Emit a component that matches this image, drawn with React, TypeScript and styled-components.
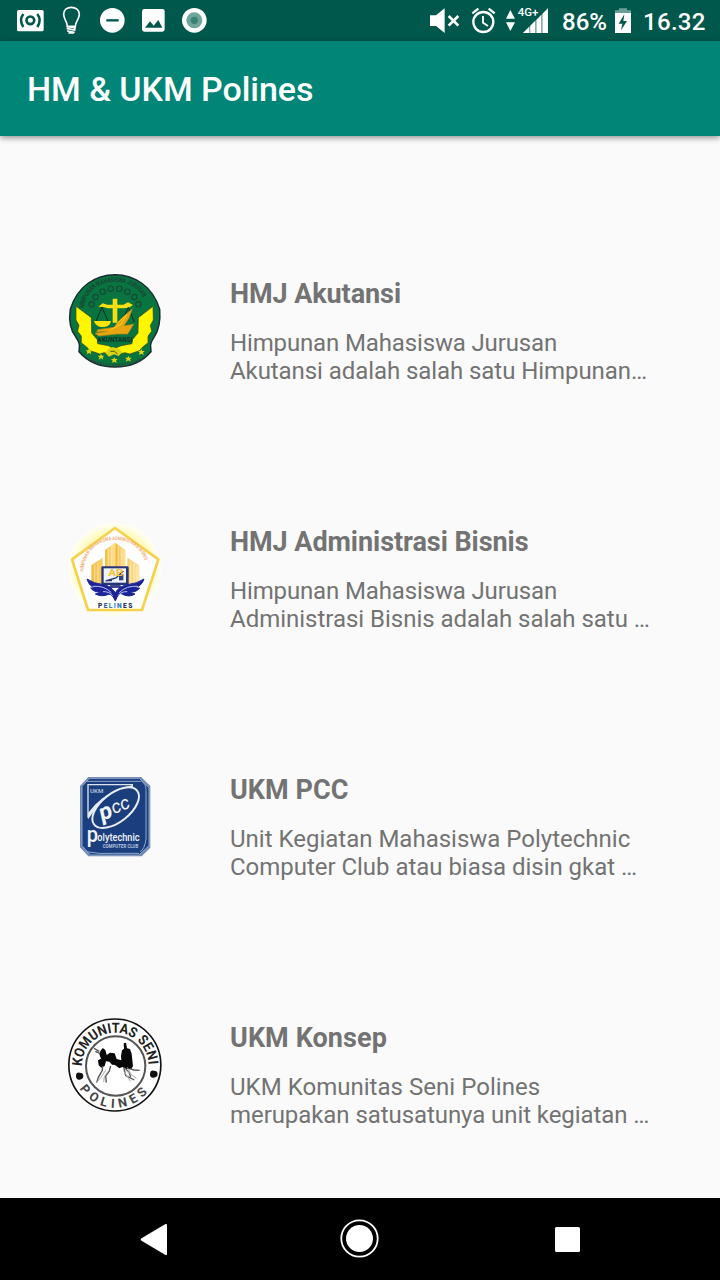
import React from "react";
import styled, { createGlobalStyle } from "styled-components";

const GlobalStyle = createGlobalStyle`
  * { box-sizing: border-box; }
  body { margin: 0; background: #fafafa; font-family: Roboto, "Liberation Sans", sans-serif; }
`;

const Screen = styled.div`
  display: flex;
  flex-direction: column;
  width: 720px;
  height: 1280px;
  overflow: hidden;
  background: #fafafa;
`;

const StatusBar = styled.header`
  display: flex;
  flex: none;
  justify-content: space-between;
  height: 41px;
  padding: 0 14px 0 10px;
  background: #00574b;
  color: #fff;
`;

const StatusGroup = styled.div`
  display: flex;
  align-items: center;
`;

const StatusIcon = styled.svg<{ $w: number; $gap?: number }>`
  flex: none;
  display: block;
  width: ${(p) => p.$w}px;
  height: 41px;
  margin-right: ${(p) => p.$gap ?? 0}px;
`;

const StatusText = styled.span<{ $w: number; $tracking?: number }>`
  width: ${(p) => p.$w}px;
  font-size: 24px;
  line-height: 41px;
  font-weight: 500;
  letter-spacing: ${(p) => p.$tracking ?? 0}px;
  white-space: nowrap;
  padding-top: 3px;
`;

const AppBar = styled.div`
  position: relative;
  flex: none;
  display: flex;
  align-items: center;
  height: 95px;
  padding: 0 27px;
  background: #008577;
  box-shadow: 0 2px 6px rgba(0, 0, 0, 0.42);
`;

const AppTitle = styled.h1`
  margin: 0;
  color: #fff;
  font-size: 34px;
  line-height: 40px;
  font-weight: 500;
  letter-spacing: -0.05px;
`;

const List = styled.ul`
  flex: 1;
  min-height: 0;
  margin: 0;
  padding: 61px 0 0;
  list-style: none;
`;

const Row = styled.li`
  display: grid;
  grid-template-columns: 170px 1fr;
  align-items: center;
  height: 248px;
  padding-left: 60px;
`;

const Logo = styled.svg`
  display: block;
  width: 110px;
  height: 110px;
`;

const RowText = styled.div`
  color: #737373;
  padding-top: 20px;
`;

const RowTitle = styled.h2<{ $tracking: number }>`
  margin: 0 0 19px;
  font-size: 27px;
  line-height: 32px;
  font-weight: 700;
  letter-spacing: ${(p) => p.$tracking}px;
`;

const RowDescription = styled.p`
  margin: 0;
  font-size: 24px;
  line-height: 28px;
`;

const DescriptionLine = styled.span<{ $tracking: number }>`
  display: block;
  white-space: nowrap;
  letter-spacing: ${(p) => p.$tracking}px;
`;

const NavBar = styled.nav`
  flex: none;
  display: grid;
  grid-template-columns: repeat(3, 206px);
  justify-content: center;
  height: 82px;
  background: #000;
`;

const NavButton = styled.button`
  display: flex;
  align-items: center;
  justify-content: center;
  padding: 0;
  border: 0;
  background: none;
`;

function AkuntansiLogo() {
  return (
    <Logo viewBox="0 3 330 330">
      <circle cx="165" cy="170" r="138" fill="#fff" />
      <path
        d="M31 133C51 65 106 29 165 29s114 36 134 104c3 36-2 62-17 84-8 12-12 20-10 29l1 14C247 290 211 306 165 306S83 290 57 260l1-14c2-9-2-17-10-29C31 195 26 165 31 133Z"
        fill="#08743f"
        stroke="#1d2c35"
        strokeWidth="4.500"
      />
      <path id="akArc" d="M71 130C79 78 116 51 165 51s86 27 94 79" fill="none" />
      <text fontFamily="Roboto, sans-serif" fontSize="20" fontWeight="700" fill="#1b4237">
        <textPath href="#akArc" textLength="236" lengthAdjust="spacingAndGlyphs">HIMPUNAN MAHASISWA JURUSAN</textPath>
      </text>
      <g fill="none" stroke="#1a4638" strokeWidth="3.500">
        <circle cx="95" cy="118" r="8" />
        <circle cx="107" cy="96" r="8" />
        <circle cx="128" cy="80" r="8" />
        <circle cx="152" cy="71" r="8" />
        <circle cx="178" cy="71" r="8" />
        <circle cx="202" cy="80" r="8" />
        <circle cx="223" cy="96" r="8" />
        <circle cx="235" cy="118" r="8" />
      </g>
      <g fill="#fff500" stroke="#39451b" strokeWidth="2">
        <path d="M48 124 94 158 95 204 112 224 113 236 145 242 160 250 151 268 132 263 119 267 105 262 90 257 80 246 64 233 64 213 53 199 57 181 48 165Z" />
        <path d="M279 124 235 158 234 204 217 224 216 236 184 242 165 250 175 268 195 263 209 267 224 262 238 257 248 246 264 233 264 213 275 199 271 181 280 165Z" />
      </g>
      <path d="M158 101h14v72h-14zM115 125l13-10 14 4h48l14-7 15 8-13 8-15 2h-48l-13-4Z" fill="#f6df10" />
      <path d="m126 127-19 44m19-44 19 44m60-44-20 44m20-44 18 44" stroke="#112b27" strokeWidth="3" />
      <path d="M102 168h51c-3 14-12 18-25 18s-22-5-26-18Z" fill="#ffe400" />
      <path d="m113 194 49-7 17-22 38-34-10 28-15 23 29-4-18 29h-32l-54 6-12-8 37-6-32 2Z" fill="#e7a510" stroke="#b98911" strokeWidth="2" />
      <path d="m151 194 32-16 17-29-31 29" fill="none" stroke="#ffd01b" strokeWidth="3" />
      <text x="112" y="230" textLength="106" lengthAdjust="spacingAndGlyphs" fontFamily="Roboto, sans-serif" fontSize="22" fontWeight="700" fill="#132e2b">AKUNTANSI</text>
      <path d="m144 252 14-6 19 6 10 9-11 12-14-5-15 7-10-10Z" fill="#ddd314" />
      <path d="M151 259h12l10 8" fill="none" stroke="#44601d" strokeWidth="3" />
      <g fill="#dfd412">
        {[[87, 259], [123, 275], [163, 285], [205, 281], [244, 261]].map(([x, y]) => (
          <path key={x} transform={`translate(${x} ${y})`} d="m0-9 3 6h7l-5 5 2 7-7-4-7 4 2-7-5-5h7Z" />
        ))}
      </g>
      <path d="M86 282q79 34 158 0" fill="none" stroke="#2a493a" strokeWidth="5" strokeDasharray="5 4" />
    </Logo>
  );
}

function BisnisLogo() {
  return (
    <Logo viewBox="0 -3 330 330">
      <defs>
        <radialGradient id="halo">
          <stop offset="78%" stopColor="#fff9b8" />
          <stop offset="92%" stopColor="#fffde2" />
          <stop offset="100%" stopColor="#fffef5" />
        </radialGradient>
        <linearGradient id="tower">
          <stop stopColor="#f4bd43" />
          <stop offset=".45" stopColor="#ffe194" />
          <stop offset=".55" stopColor="#f4bb3d" />
          <stop offset="1" stopColor="#ffe5a8" />
        </linearGradient>
      </defs>
      <circle cx="164" cy="163" r="139" fill="url(#halo)" />
      <path d="M165 39 295 133 246 285H84L36 133Z" fill="#fff" stroke="#f6d24c" strokeWidth="8" strokeLinejoin="round" />
      <path id="abArc" d="M70 170C77 104 116 75 165 75s90 29 98 95" fill="none" />
      <text fontFamily="Roboto, sans-serif" fontSize="15" fontWeight="700" fill="#edb077">
        <textPath href="#abArc" textLength="266" lengthAdjust="spacingAndGlyphs">HIMPUNAN MAHASISWA ADMINISTRASI BISNIS</textPath>
      </text>
      <g fill="url(#tower)">
        <path d="m165 83 32 22v105h-62V105Z" />
        <path d="m128 128-34 23v50l35 16ZM202 128l36 23v50l-37 16Z" />
      </g>
      <g stroke="#fff0be" strokeWidth="2">
        <path d="M145 101v54m10-64v65m20-65v65m10-57v57M104 148v52m10-58v64M212 140v71m10-64v60m9-53v45" />
      </g>
      <path d="M128 154h74q4 0 4 4v48q0 4-4 4h-74q-4 0-4-4v-48q0-4 4-4Z" fill="#273579" />
      <path d="M131 160h67v43h-67z" fill="#eef3fb" />
      <path d="m137 198 31-9 22-21m-48 29h14" stroke="#26356f" strokeWidth="4" fill="none" />
      <path d="M177 177h13v19h-13z" fill="#33437c" />
      <text x="145" y="184" fontFamily="Roboto, sans-serif" fontSize="26" fontWeight="700" fill="#f7c02c" textLength="45" lengthAdjust="spacingAndGlyphs">AB</text>
      <path d="M151 210h30l4 9h-40Z" fill="#3a468e" />
      <path d="M81 192q20 14 50 17 21 3 35 24 13-21 36-24 29-3 50-17-6 21-29 27l16 0q-9 13-31 13l17 5q-18 12-41-1-8-3-18 22-10-23-20-20-22 9-40-1l17-5q-21 0-31-13h16Q88 216 81 192Z" fill="#1a2397" stroke="#1a2397" strokeWidth="3" />
      <path d="M98 214q35-3 56 19m80-19q-35-3-56 19m-49-3q18-1 29 12m44-12q-18-1-28 12" fill="none" stroke="#dfe3ff" strokeWidth="2.500" />
      <text x="114" y="278" textLength="103" fontFamily="Roboto, sans-serif" fontSize="20" fontWeight="900" fill="#26334f">
        P<tspan fill="#375e86">E</tspan><tspan fill="#3b82a8">L</tspan><tspan fill="#2994ce">I</tspan><tspan fill="#3577b6">N</tspan>ES
      </text>
    </Logo>
  );
}

function PccLogo() {
  return (
    <Logo viewBox="0 -9 330 330">
      <path d="M85 36h158l28 27v185l-26 26H85l-25-27V63Z" fill="#7089b4" />
      <path d="M88 40h150l29 28v174l-30 28H91l-25-28V64Z" fill="#1b3f7e" stroke="#8fa5c8" strokeWidth="3" />
      <path d="M77 49h167m1 0q13 8 13 25v148q-4 31-18 38" fill="none" stroke="#8fa6ca" strokeWidth="3" />
      <path d="M84 158V59h133v12" fill="none" stroke="#dbe4ef" strokeWidth="4" />
      <path d="M84 163V144L105 119 128 99 155 84 184 68 217 61 213 72 177 82 143 98 116 119Z" fill="#e4ebf2" />
      <ellipse cx="167" cy="128" rx="82" ry="43" transform="rotate(-38 167 128)" fill="#1b3f7d" stroke="#e7edf2" strokeWidth="6" />
      <g transform="rotate(-23 167 137)" fill="#f0f3f7" fontFamily="Roboto, sans-serif" fontStyle="italic">
        <text x="118" y="150" fontSize="68" fontWeight="700" textLength="39" lengthAdjust="spacingAndGlyphs">p</text>
        <text x="158" y="145" fontSize="56" fontWeight="400" textLength="56" lengthAdjust="spacingAndGlyphs">cc</text>
      </g>
      <text x="90" y="85" fontFamily="Roboto, sans-serif" fontSize="14" fontWeight="700" fill="#a9bbd5" textLength="40" lengthAdjust="spacingAndGlyphs">UKM</text>
      <text x="80" y="232" fontFamily="Roboto, sans-serif" fontSize="64" fill="#f1f4f8" fontWeight="500" textLength="34" lengthAdjust="spacingAndGlyphs">p</text>
      <text x="112" y="228" fontFamily="Roboto, sans-serif" fontSize="32" fill="#f0f3f8" fontWeight="500" textLength="127" lengthAdjust="spacingAndGlyphs">olytechnic</text>
      <text x="128" y="248" fontFamily="Roboto, sans-serif" fontSize="17" fill="#b6c5dc" fontWeight="700" textLength="107" lengthAdjust="spacingAndGlyphs">COMPUTER CLUB</text>
      <path d="M79 260q38 8 78 5h80" stroke="#8ea8cd" strokeWidth="3" fill="none" />
    </Logo>
  );
}

function KonsepLogo() {
  return (
    <Logo viewBox="0 0 330 330">
      <circle cx="164.500" cy="165" r="138" fill="#fff" stroke="#111" strokeWidth="5" />
      <circle cx="167" cy="168" r="89" fill="#fff" stroke="#555" strokeWidth="6" />
      <path id="konsepTop" d="M66 169A100 100 0 0 1 266 167" fill="none" />
      <path id="konsepBottom" d="M54 228A126 126 0 0 0 274 230" fill="none" />
      <g fontFamily="Roboto, sans-serif" fontWeight="700">
        <text fill="#222" fontSize="42"><textPath href="#konsepTop" textLength="311" lengthAdjust="spacingAndGlyphs">KOMUNITAS SENI</textPath></text>
        <text fill="#444" fontSize="38"><textPath href="#konsepBottom" startOffset="9" textLength="238" lengthAdjust="spacing">POLINES</textPath></text>
      </g>
      <path d="M59 188q11 0 11 10t-11 11-11-11 11-10ZM281 182q12 0 12 10t-12 11-11-11 11-10Z" fill="#111" />
      <path d="m121 124 7-10 8 6 4 15 10-7 14 2 6 17 14 4-1-13 3-17 6-5-1-16 7-2 3 17 9 2 5 14 4 37-5 10-14-1-13-6-9 4-13-10-9-1-8-9-10-1-4 14-10 5-8-7-2-15 9-5-5-13Z" fill="#080808" />
      <path d="m102 115 16 9m-12 0 13 6m90 46 13 4 17 1M128 168l-1 13-12 21-5 16m42-50-4 15-11 15 2 20m52-47 6 26 26 13m-27-35 12 14 4 12" fill="none" stroke="#555" strokeWidth="4" />
      <path d="m138 179-16 24-11 13m35-34-13 18-2 16m60-32 21 30m0-24-10-18m-2 11 29 22" fill="none" stroke="#aaa" strokeWidth="3" />
    </Logo>
  );
}

const organizations = [
  {
    title: "HMJ Akutansi",
    tracking: -0.08,
    lines: [
      { text: "Himpunan Mahasiswa Jurusan", tracking: -0.14 },
      { text: "Akutansi adalah salah satu Himpunan…", tracking: -0.07 },
    ],
    Emblem: AkuntansiLogo,
  },
  {
    title: "HMJ Administrasi Bisnis",
    tracking: -0.05,
    lines: [
      { text: "Himpunan Mahasiswa Jurusan", tracking: -0.14 },
      { text: "Administrasi Bisnis adalah salah satu …", tracking: -0.02 },
    ],
    Emblem: BisnisLogo,
  },
  {
    title: "UKM PCC",
    tracking: 0.05,
    lines: [
      { text: "Unit Kegiatan Mahasiswa Polytechnic", tracking: 0 },
      { text: "Computer Club atau biasa disin gkat …", tracking: -0.03 },
    ],
    Emblem: PccLogo,
  },
  {
    title: "UKM Konsep",
    tracking: 0.08,
    lines: [
      { text: "UKM Komunitas Seni Polines", tracking: 0.03 },
      { text: "merupakan satusatunya unit kegiatan …", tracking: -0.07 },
    ],
    Emblem: KonsepLogo,
  },
];

function Notifications() {
  return (
    <StatusGroup>
      <StatusIcon $w={41} viewBox="30 0 123 123">
        <rect x="51" y="30" width="80" height="64" rx="5" fill="#fff" />
        <circle cx="91" cy="61" r="11.500" fill="none" stroke="#00574b" strokeWidth="8" />
        <path d="M70 42q-14 19 0 39M112 42q14 19 0 39" fill="none" stroke="#00574b" strokeWidth="7.500" />
      </StatusIcon>
      <StatusIcon $w={41} viewBox="153 0 123 123">
        <path d="M202 79c0-15-11-21-11-36 0-13 10-21 23-21s24 8 24 21c0 15-12 21-12 36Z" fill="none" stroke="#fff" strokeWidth="5" />
        <path d="m202 80 23 3-1 7-22-4m1 7 19 4M207 99h13" fill="none" stroke="#fff" strokeWidth="5" strokeLinecap="round" />
      </StatusIcon>
      <StatusIcon $w={41} viewBox="276 0 123 123">
        <circle cx="337" cy="61" r="37" fill="#fff" />
        <path d="M319 61h37" stroke="#00574b" strokeWidth="7" />
      </StatusIcon>
      <StatusIcon $w={41} viewBox="399 0 123 123">
        <rect x="426" y="27" width="68" height="68" rx="7" fill="#fff" />
        <path d="m435 83 15-19 11 13 14-17 12 23Z" fill="#00574b" />
      </StatusIcon>
      <StatusIcon $w={41} viewBox="522 0 123 123">
        <circle cx="583" cy="61" r="37" fill="#fff" />
        <circle cx="583" cy="61" r="24" fill="#6fa59d" />
        <circle cx="583" cy="61" r="11" fill="#3b8276" />
      </StatusIcon>
    </StatusGroup>
  );
}

function SystemStatus() {
  return (
    <StatusGroup>
      <StatusIcon $w={34} $gap={8} viewBox="24 0 102 123">
        <path d="M30 46h18l26-21v74L48 78H30Z" fill="#fff" />
        <path d="m86 48 29 29m0-29L86 77" stroke="#fff" strokeWidth="8" />
      </StatusIcon>
      <StatusIcon $w={27} $gap={7} viewBox="150 0 81 123">
        <circle cx="190" cy="66" r="30" fill="none" stroke="#fff" strokeWidth="7" />
        <path d="m157 40 18-14m31 0 18 14" stroke="#fff" strokeWidth="7" />
        <path d="M189 48v20l15 10" fill="none" stroke="#fff" strokeWidth="5.500" />
      </StatusIcon>
      <StatusIcon $w={46} $gap={12} viewBox="252 0 138 123">
        <path d="m258 56 13-26 14 26ZM258 67h27l-14 26Z" fill="#fff" />
        <text x="293" y="48" fill="#fff" fontFamily="Roboto, sans-serif" fontSize="34" fontWeight="500" textLength="62" lengthAdjust="spacingAndGlyphs">4G+</text>
        <path d="M309 99 384 25v74Z" fill="#84b0a9" />
        <path d="M309 99 327 81v18ZM331 77l14-14v36h-14ZM350 59l13-13v53h-13ZM368 41l16-16v74h-16Z" fill="#fff" />
      </StatusIcon>
      <StatusText $w={51}>86%</StatusText>
      <StatusIcon $w={20} $gap={10} viewBox="579 0 60 123">
        <path d="M585 39V31h12v-6h24v6h12v8Z" fill="#6ba098" />
        <path d="M585 39h48v60h-48Z" fill="#fff" />
        <path d="m613 43-17 28h11l-4 20 18-28h-11Z" fill="#00574b" />
      </StatusIcon>
      <StatusText $w={63} $tracking={0.3}>16.32</StatusText>
    </StatusGroup>
  );
}

export default function App() {
  return (
    <>
      <GlobalStyle />
      <Screen>
        <StatusBar>
          <Notifications />
          <SystemStatus />
        </StatusBar>
        <AppBar>
          <AppTitle>HM &amp; UKM Polines</AppTitle>
        </AppBar>
        <List>
          {organizations.map(({ title, tracking, lines, Emblem }) => (
            <Row key={title}>
              <Emblem />
              <RowText>
                <RowTitle $tracking={tracking}>{title}</RowTitle>
                <RowDescription>
                  {lines.map((line) => (
                    <DescriptionLine key={line.text} $tracking={line.tracking}>
                      {line.text}
                    </DescriptionLine>
                  ))}
                </RowDescription>
              </RowText>
            </Row>
          ))}
        </List>
        <NavBar>
          <NavButton aria-label="Back">
            <svg width="40" height="40" viewBox="0 0 40 40">
              <path d="M7.500 19.300 31.500 5q1.500-.5 1.500 1v29q0 1.500-1.500 1L7.500 21.700q-1.800-1.200 0-2.400Z" fill="#fff" />
            </svg>
          </NavButton>
          <NavButton aria-label="Home">
            <svg width="40" height="40" viewBox="0 0 40 40">
              <circle cx="19.500" cy="19.500" r="18.200" fill="none" stroke="#fff" strokeWidth="1.800" />
              <circle cx="19.500" cy="19.500" r="13.500" fill="#fff" />
            </svg>
          </NavButton>
          <NavButton aria-label="Recent apps">
            <svg width="40" height="40" viewBox="0 0 40 40">
              <rect x="9" y="8" width="25" height="25" rx="1.500" fill="#fff" />
            </svg>
          </NavButton>
        </NavBar>
      </Screen>
    </>
  );
}
